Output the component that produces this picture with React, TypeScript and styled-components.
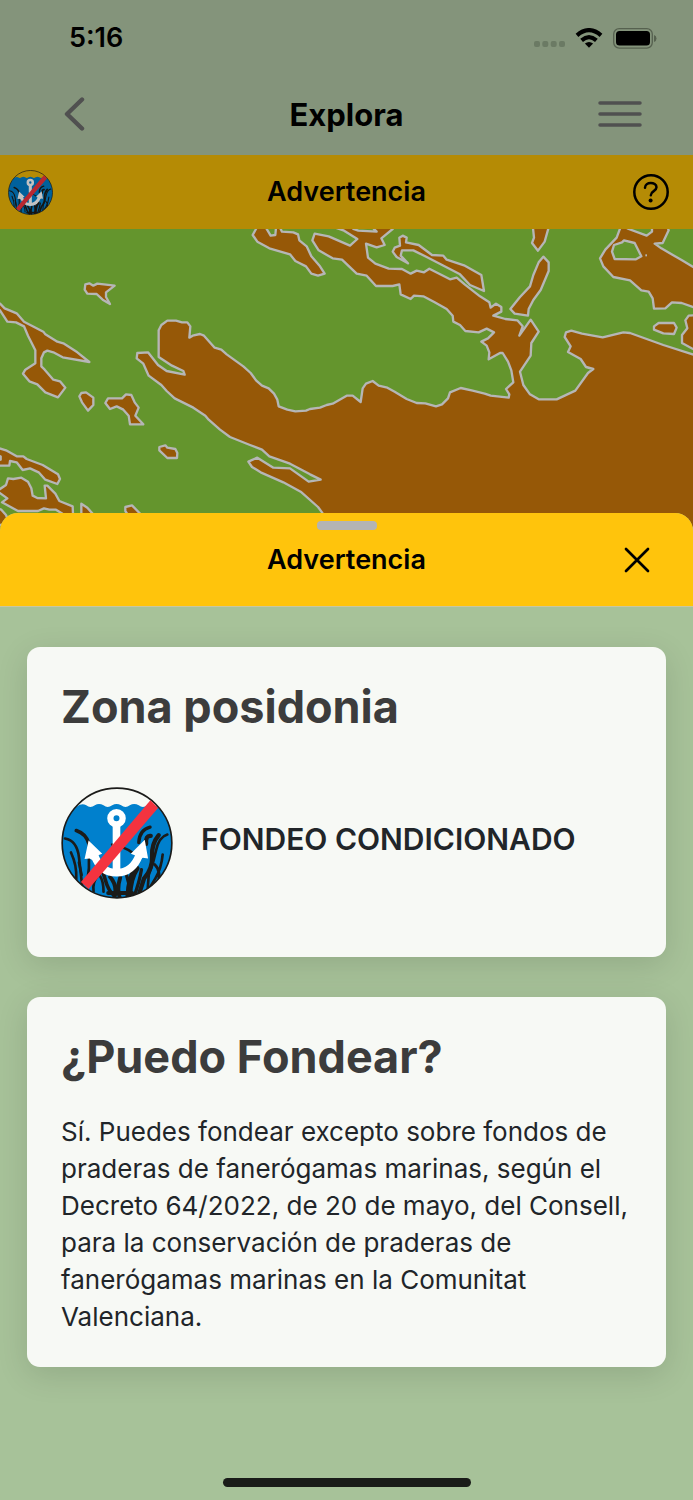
import React from "react";
import styled, { createGlobalStyle } from "styled-components";

const color = {
  header: "#84947b",
  bannerDim: "#b58b05",
  banner: "#ffc40c",
  sheet: "#a7c299",
  card: "#f7f9f5",
  heading: "#3c3c3c",
  body: "#212529",
  muted: "#505050",
  handle: "#b4b4b4",
  land: "#965807",
  meadow: "#64952d",
  shore: "#b6b6b6",
};

const GlobalStyle = createGlobalStyle`
  *, *::before, *::after { box-sizing: border-box; }
  body {
    margin: 0;
    background: ${color.sheet};
    font-family: Inter, "Liberation Sans", sans-serif;
    color: #000;
  }
  h1, h2, p { margin: 0; }
`;

const Screen = styled.div`
  display: flex;
  flex-direction: column;
  min-height: 100vh;
`;

const Header = styled.header`
  padding-bottom: 3px;
  background: ${color.header};
`;

const StatusBar = styled.div`
  display: flex;
  align-items: center;
  justify-content: space-between;
  height: 76px;
  padding: 0 36px 0 69px;
`;

const Clock = styled.time`
  font-size: 27px;
  line-height: 32px;
  font-weight: 600;
`;

const StatusIcons = styled.div`
  display: flex;
  align-items: center;
  gap: 10px;
`;

const TitleRow = styled.div<{ $height: number; $pad: string; $bg?: string }>`
  display: grid;
  grid-template-columns: 1fr auto 1fr;
  align-items: center;
  height: ${(p) => p.$height}px;
  padding: ${(p) => p.$pad};
  background: ${(p) => p.$bg ?? "transparent"};

  & > :last-child {
    justify-self: end;
  }
`;

const PageTitle = styled.h1`
  grid-column: 2;
  padding-top: 2px;
  font-size: 31px;
  line-height: 40px;
  font-weight: 700;
`;

const BannerTitle = styled.h2`
  grid-column: 2;
  font-size: 27px;
  line-height: 36px;
  font-weight: 600;
`;

const IconButton = styled.button<{ $pad?: string }>`
  display: flex;
  justify-self: start;
  padding: ${(p) => p.$pad ?? "0"};
  border: 0;
  background: none;
  color: inherit;
  cursor: pointer;
`;

const MutedIconButton = styled(IconButton)`
  color: ${color.muted};
`;

const DimmedSign = styled.span`
  display: flex;
  filter: brightness(0.76);
`;

const MapView = styled.svg`
  display: block;
  width: 100%;
  height: 300px;
  background: ${color.meadow};
`;

const Sheet = styled.section`
  display: flex;
  flex: 1;
  flex-direction: column;
  position: relative;
  margin-top: -16px;
  border-radius: 18px 18px 0 0;
  background: ${color.sheet};
  overflow: hidden;
`;

const SheetHeader = styled.header`
  background: ${color.banner};
  padding-top: 8px;
  border-bottom: 1px solid #c9c7a0;
`;

const Handle = styled.div`
  width: 60px;
  height: 9px;
  margin: 0 auto;
  border-radius: 4px;
  background: ${color.handle};
`;

const Cards = styled.div`
  display: flex;
  flex-direction: column;
  gap: 40px;
  padding: 40px 27px;
`;

const Card = styled.article`
  padding: 32px 34px;
  border-radius: 13px;
  background: ${color.card};
  box-shadow: 0 8px 32px rgba(0, 0, 0, 0.12);
`;

const CardTitle = styled.h2`
  font-size: 45px;
  line-height: 56px;
  font-weight: 700;
  color: ${color.heading};
`;

const Notice = styled.div`
  display: flex;
  align-items: center;
  gap: 28px;
  padding: 52px 0 26px;
`;

const NoticeText = styled.p`
  font-size: 30px;
  line-height: 36px;
  font-weight: 600;
  padding-bottom: 8px;
  color: ${color.body};
`;

const CardText = styled.p`
  margin-top: 28px;
  font-size: 26px;
  line-height: 37px;
  color: ${color.body};
`;

const HomeBar = styled.div`
  width: 248px;
  height: 9px;
  margin: auto auto 13px;
  border-radius: 5px;
  background: #1a1c19;
`;

const landmasses = [
  "M256 178L268 175 280 182 292 176 344 182 318 202 318 216 330 237 308 224 290 207 262 206 254 194Z",
  "M-9 230L0 236 14 250 50 265 72 290 130 320 136 328 172 350 190 355 232 382 268 411 188 397 160 382 142 377 132 382 124 400 124 424 134 434 160 464 180 469 196 488 174 517 136 502 112 478 88 469 69 446 76 434 106 415 106 376 84 332 72 304 48 292 22 290 0 256-9 250Z",
  "M244 504L258 502 280 518 280 540 264 557 246 532 238 514Z",
  "M324 520L366 520 378 508 394 510 404 532 416 548 406 572 430 598 390 598 386 572 370 554 350 544 330 552 316 534Z",
  "M478 666L496 661 502 668 526 672 532 684 531 699 502 699 478 676Z",
  "M-9 668L18 676 50 694 70 694 80 702 128 720 174 748 180 762 172 777 136 764 116 742 90 730 68 735 50 712 30 708 28 722-9 722-9 706 2 704 2 694-9 692Z",
  "M-9 798L18 780 24 760 40 762 64 758 84 770 94 790 98 812 112 819 138 820 134 782 142 782 166 806 178 828 218 844 220 890 184 864 168 854 148 854 132 850 114 858 54 858 6 832 22 820Z",
  "M244 890V836L262 848 290 880V890Z",
  "M390 880L376 858 376 846 396 841 430 876Z",
  "M-9 850L4 854 18 870 30 900-9 900Z",
  "M476 316L484 300 502 287 528 287 546 292 562 292 571 304 568 338 578 332 600 327 612 332 644 368 664 374 680 388 730 424 752 444 768 466 786 482 806 490 822 506 832 524 836 544 862 554 886 559 918 557 930 552 960 548 980 540 998 536 1040 512 1058 512 1082 531 1088 490 1098 476 1118 468 1136 482 1162 488 1184 500 1220 522 1250 534 1276 535 1308 544 1326 538 1344 520 1350 502 1382 489 1418 497 1454 506 1472 512 1526 518 1528 508 1518 492 1540 472 1534 436 1524 410 1508 384 1500 384 1466 403 1468 382 1460 362 1444 350 1464 340 1482 322 1460 311 1436 322 1396 318 1380 300 1360 290 1358 272 1340 252 1304 232 1270 214 1242 212 1232 222 1202 208 1198 178 1178 183 1128 183 1100 152 1070 146 1026 104 998 100 956 76 937 46 944 26 986 34 1050 62 1072 42 1030 16 995 4 1050-6 1060 12 1075 17 1130 20 1118 8 1180 0 1178 12 1144 40 1154 60 1130 67 1098 56 1104 98 1126 116 1166 131 1206 132 1232 146 1250 137 1272 142 1288 131 1350 163 1370 158 1394 178 1440 214 1468 232 1472 248 1488 236 1504 246 1504 260 1480 272 1516 282 1552 286 1568 304 1558 332 1592 284 1616 320 1594 354 1592 392 1560 440 1570 480 1590 508 1616 523 1670 523 1726 497 1764 444 1780 432 1758 426 1742 402 1704 381 1712 364 1694 336 1698 322 1714 317 1746 326 1808 337 1870 322 1890 324 1990 360 2090 392 2090 910 990 910 966 862 954 846 902 800 850 772 782 742 756 726 745 710 772 698 820 728 870 730 926 770 962 764 930 748 870 716 808 694 786 674 750 660 690 636 660 614 626 584 616 572 580 548 524 520 500 498 484 480 446 452 430 416 410 400 412 384 444 382 474 420 500 438 554 449 550 438 516 422 476 396Z",
  "M760 0L768 12 758 30 772 50 808 70 870 88 886 108 918 124 934 146 954 152 974 146 960 124 934 94 920 64 898 46 894 28 880 22 846 20 838 4 828 8 826 30 812 32 800 12 798 0Z",
  "M1198 38L1208 32 1220 38 1218 52 1256 60 1296 90 1330 92 1340 104 1392 121 1444 150 1452 198 1410 180 1380 148 1322 118 1280 96 1240 76 1206 76 1202 92 1224 115 1190 96 1178 80 1184 68 1200 62Z",
  "M1598 0L1602 38 1596 54 1614 77 1634 50 1648 0Z",
  "M1630 95L1646 112 1646 138 1622 195 1600 225 1586 252 1584 272 1544 266 1531 252 1560 216 1590 184 1600 150 1616 112Z",
  "M1864 0L1850 38 1816 74 1800 100 1810 124 1840 156 1890 166 1924 196 1946 200 1958 220 1962 251 1996 250 2016 232 2045 234 2090 250 2090 132 2046 106 1984 70 1964 56 1988 54 2006 16 2000 0 1956 0 1956 20 1940 32 1886 12ZM1842 60L1866 52 1872 46 1904 54 1924 94 1908 103 1844 102 1836 80Z",
  "M1962 304L1976 294 2022 294 2030 308 2022 327 1990 325 1962 314Z",
  "M2090 270L2066 272 2056 286 2062 310 2046 330 2046 354 2090 378Z",
];

function SeabedMap() {
  return (
    <MapView
      viewBox="0 12 2079 900"
      preserveAspectRatio="xMidYMin slice"
      role="img"
      aria-label="Mapa de praderas de posidonia"
    >
      <g
        fill={color.land}
        fillRule="evenodd"
        stroke={color.shore}
        strokeWidth="7"
        strokeLinejoin="round"
      >
        {landmasses.map((d) => (
          <path key={d} d={d} />
        ))}
      </g>
      <rect x="1936" y="88" width="5" height="6" fill={color.shore} />
    </MapView>
  );
}

function AnchorSign({ size }: { size: number }) {
  const clip = `sign-clip-${size}`;
  return (
    <svg
      width={size}
      height={size}
      viewBox="36 35 337 337"
      role="img"
      aria-label="Fondeo condicionado"
    >
      <defs>
        <clipPath id={clip}>
          <circle cx="204.500" cy="203.500" r="165" />
        </clipPath>
      </defs>
      <g clipPath={`url(#${clip})`}>
        <path
          fill="#0080cd"
          d="M30 94H84Q98 82 112 90Q124 100 138 90Q150 82 164 90Q176 100 190 90Q203 82 217 90Q230 100 243 90Q256 82 270 90Q282 100 296 90Q310 84 325 94H380V380H30Z"
        />
        <g fill="none" stroke="#1b1b19" strokeWidth="8" strokeLinecap="round">
          <path d="M48 190Q84 196 90 246T100 336" />
          <path d="M66 232Q84 270 82 312" />
          <path d="M82 166Q112 176 120 206T134 250" strokeWidth="11" />
          <path d="M120 250Q122 280 116 312M90 262L98 300" />
          <path d="M134 250Q158 272 168 310T196 362" strokeWidth="11" />
          <path d="M148 300Q130 320 134 350M154 304Q164 320 164 350" />
          <path d="M184 306Q208 334 196 370M214 308Q204 340 212 366" strokeWidth="12" />
          <path d="M190 208Q230 216 250 232" />
          <path d="M304 156Q272 164 270 202" strokeWidth="10" />
          <path d="M262 280Q242 310 240 364" strokeWidth="20" />
          <path d="M306 182Q290 180 292 206M330 180Q308 206 310 244T286 310L270 360" strokeWidth="13" />
          <path d="M356 178Q330 186 322 226T300 300L296 352" />
          <path d="M342 238Q338 280 320 310T288 362M318 268Q340 290 326 330" />
          <path d="M278 284Q272 320 256 364M232 296L244 340" strokeWidth="10" />
          <path d="M66 310L108 346M178 354H250" strokeWidth="12" />
        </g>
        <path
          fill="none"
          stroke="#fff"
          strokeWidth="23"
          d="M203 150V292M136 238Q154 293 203 293T272 238"
        />
        <circle cx="203" cy="129" r="18.500" fill="none" stroke="#fff" strokeWidth="19" />
        <path fill="#fff" d="M119 196L160 236 146 241 135 258 122 250 107 252ZM288 194L246 236 262 242 270 256 282 248 298 250Z" />
      </g>
      <circle cx="204.500" cy="203.500" r="165" fill="none" stroke="#1b1b19" strokeWidth="5" />
      <path fill="#f4333f" d="M305 75L328 98 119 342 96 321Z" />
    </svg>
  );
}

function StatusGlyphs() {
  return (
    <StatusIcons>
      <svg width="32" height="18" viewBox="0 0 32 18" aria-hidden="true">
        <g fill="#6b7a64">
          <rect x="1" y="12" width="6" height="6" rx="2" />
          <rect x="9.300" y="12" width="6" height="6" rx="2" />
          <rect x="17.700" y="12" width="6" height="6" rx="2" />
          <rect x="26" y="12" width="6" height="6" rx="2" />
        </g>
      </svg>
      <svg width="28" height="20" viewBox="0 0 28 20" aria-hidden="true">
        <g fill="none" stroke="#000" strokeWidth="4.200">
          <path d="M2 7.300Q14 -3 26 7.300" />
          <path d="M6.600 12.300Q14 6 21.400 12.300" />
        </g>
        <path d="M9.900 15.600Q14 12.600 18.100 15.600L14 19.800Z" />
      </svg>
      <svg width="44" height="21" viewBox="0 0 44 21" aria-hidden="true">
        <rect x="0.700" y="0.700" width="38.600" height="19.400" rx="5.500" fill="none" stroke="#56614f" strokeWidth="1.300" />
        <rect x="3" y="3" width="34" height="14.500" rx="3.500" />
        <path d="M41 7Q43.500 8 43.500 10.400T41 14Z" fill="#56614f" />
      </svg>
    </StatusIcons>
  );
}

export default function App() {
  return (
    <>
      <GlobalStyle />
      <Screen>
        <Header>
          <StatusBar>
            <Clock>5:16</Clock>
            <StatusGlyphs />
          </StatusBar>
          <TitleRow as="nav" $height={76} $pad="0 50px">
            <MutedIconButton type="button" aria-label="Atrás" $pad="0 13px">
              <svg width="22" height="36" viewBox="0 0 22 36" fill="none" stroke="currentColor" strokeWidth="4.400" strokeLinecap="round" strokeLinejoin="round">
                <path d="M19 3.500L4 18L19 32.500" />
              </svg>
            </MutedIconButton>
            <PageTitle>Explora</PageTitle>
            <MutedIconButton type="button" aria-label="Menú">
              <svg width="46" height="28" viewBox="0 0 46 28" stroke="currentColor" strokeWidth="3.500" strokeLinecap="round">
                <path d="M3 3H43M3 14H43M3 25H43" />
              </svg>
            </MutedIconButton>
          </TitleRow>
        </Header>
        <TitleRow $height={74} $pad="0 8px" $bg={color.bannerDim}>
          <DimmedSign>
            <AnchorSign size={45} />
          </DimmedSign>
          <BannerTitle>Advertencia</BannerTitle>
          <IconButton type="button" aria-label="Ayuda" $pad="0 16px">
            <svg width="36" height="36" viewBox="0 0 36 36" fill="none" stroke="#000" strokeWidth="2.500" strokeLinecap="round">
              <circle cx="18" cy="18" r="16.700" />
              <path d="M12 13.800C12 7.300 23.500 7.600 23.500 13.300C23.500 17.300 17.800 17 17.800 21.300" />
              <circle cx="17.600" cy="26.500" r="2" fill="#000" stroke="none" />
            </svg>
          </IconButton>
        </TitleRow>
        <SeabedMap />
        <Sheet>
          <SheetHeader>
            <Handle />
            <TitleRow $height={76} $pad="0 43px 16px">
              <BannerTitle>Advertencia</BannerTitle>
              <IconButton type="button" aria-label="Cerrar">
                <svg width="26" height="26" viewBox="0 0 26 26" stroke="#000" strokeWidth="2.700" strokeLinecap="round">
                  <path d="M2 2L24 24M24 2L2 24" />
                </svg>
              </IconButton>
            </TitleRow>
          </SheetHeader>
          <Cards>
            <Card>
              <CardTitle>Zona posidonia</CardTitle>
              <Notice>
                <AnchorSign size={112} />
                <NoticeText>FONDEO CONDICIONADO</NoticeText>
              </Notice>
            </Card>
            <Card>
              <CardTitle>¿Puedo Fondear?</CardTitle>
              <CardText>
                Sí. Puedes fondear excepto sobre fondos de praderas de
                fanerógamas marinas, según el Decreto 64/2022, de 20 de mayo,
                del Consell, para la conservación de praderas de fanerógamas
                marinas en la Comunitat Valenciana.
              </CardText>
            </Card>
          </Cards>
          <HomeBar />
        </Sheet>
      </Screen>
    </>
  );
}
